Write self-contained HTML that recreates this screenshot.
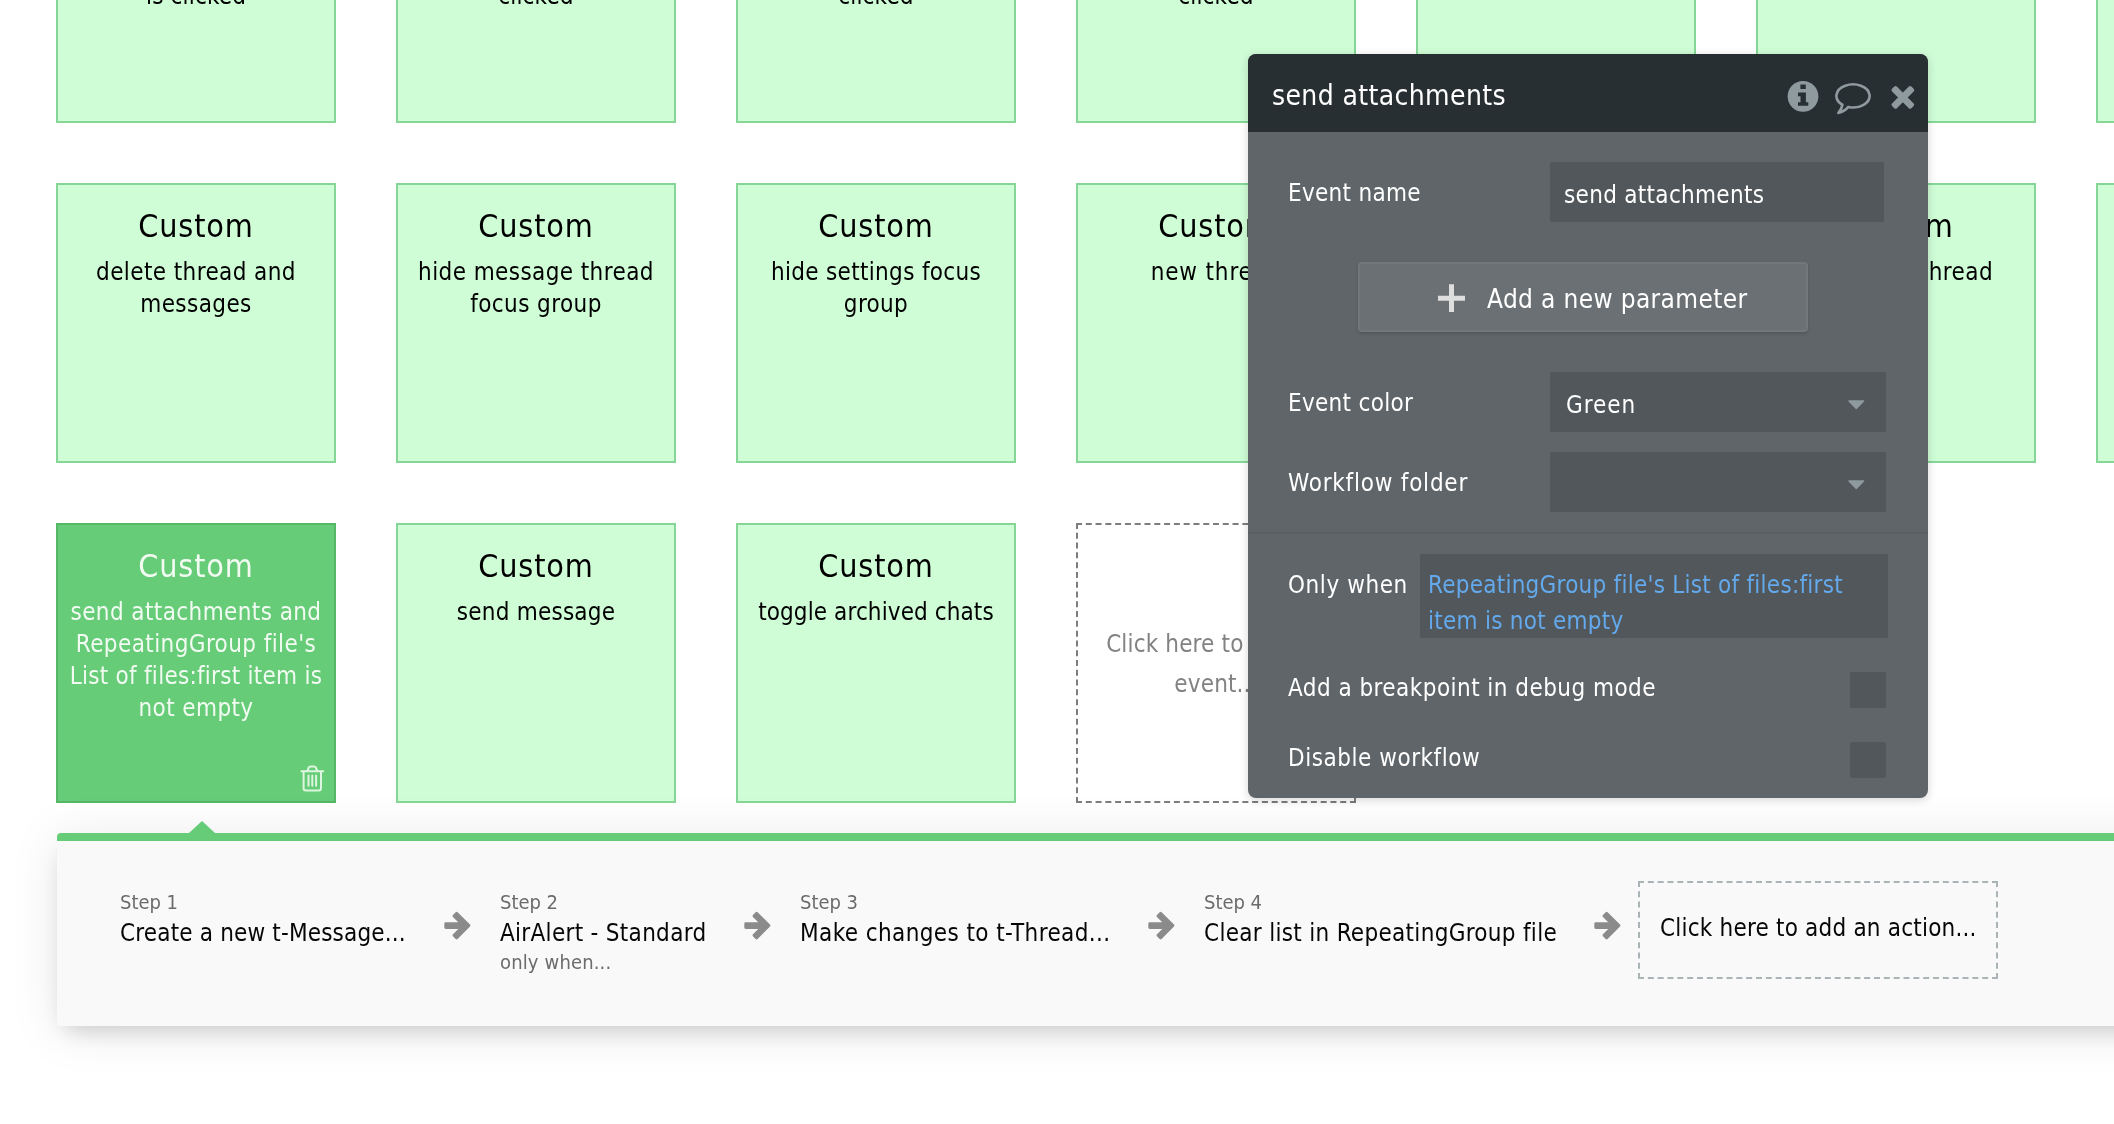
<!DOCTYPE html><html><head><meta charset="utf-8"><title>Workflow editor</title><style>
*{box-sizing:border-box;margin:0;padding:0}
html,body{width:2114px;height:1124px;overflow:hidden;background:#fff}
body{position:relative;font-family:"DejaVu Sans Condensed", "Liberation Sans", sans-serif;color:#000;-webkit-font-smoothing:antialiased}
.ev{position:absolute;width:280px;height:280px;background:#cffdd6;border:2px solid #86d797;text-align:center}
.ev.sel{background:#66cc77;border-color:#56b767;color:#fff}
.ev .t{position:absolute;left:0;right:0;font-size:32px;line-height:40px;white-space:nowrap;letter-spacing:.85px}
.ev .d{position:absolute;left:8px;right:8px;font-size:24px;line-height:32px;letter-spacing:.4px}
.ev.sel .t,.ev.sel .d{color:#f1fbf2}
.ev.new{background:transparent;border:none}
.ev.new .d{color:#828282;line-height:40px}
#app{position:absolute;left:0;top:0;width:2114px;height:1124px;overflow:hidden;will-change:transform}
.abs{position:absolute;white-space:nowrap}
#strip{position:absolute;left:57px;top:833px;width:2200px;height:193px;background:#f9f9f9;border-top:8px solid #66cc77;border-radius:4px;box-shadow:0 5px 50px rgba(0,0,0,.095),0 12px 22px -8px rgba(0,0,0,.17)}
#tri{position:absolute;left:189px;top:821px;width:0;height:0;border-left:13px solid transparent;border-right:13px solid transparent;border-bottom:12px solid #66cc77}
.step{color:#6b6b6b;font-size:20px;line-height:24px;letter-spacing:.25px}
.act{color:#060606;font-size:24px;line-height:32px;letter-spacing:.3px}
#panel{position:absolute;left:1248px;top:54px;width:680px;height:744px;background:#5f6569;border-radius:8px;box-shadow:0 2px 10px rgba(0,0,0,.16);color:#fff;overflow:hidden}
#phead{position:absolute;left:0;top:0;width:680px;height:78px;background:#282f32}
.lbl{font-size:24px;line-height:32px;color:#fff;letter-spacing:.3px}
.inp{position:absolute;background:#51575a;border-radius:2px}
</style></head><body><div id="app">
<div class="ev" style="left:56px;top:-157px">
<div class="d" style="letter-spacing:.15px;top:135.2px">is clicked</div>
</div>
<div class="ev" style="left:396px;top:-157px">
<div class="d" style="letter-spacing:.15px;top:135.2px">clicked</div>
</div>
<div class="ev" style="left:736px;top:-157px">
<div class="d" style="letter-spacing:.15px;top:135.2px">clicked</div>
</div>
<div class="ev" style="left:1076px;top:-157px">
<div class="d" style="letter-spacing:.15px;top:135.2px">clicked</div>
</div>
<div class="ev" style="left:1416px;top:-157px">
</div>
<div class="ev" style="left:1756px;top:-157px">
</div>
<div class="ev" style="left:2096px;top:-157px">
</div>
<div class="ev" style="left:56px;top:183px">
<div class="t" style="top:20.9px">Custom</div>
<div class="d" style="top:71.0px">delete thread and messages</div>
</div>
<div class="ev" style="left:396px;top:183px">
<div class="t" style="top:20.9px">Custom</div>
<div class="d" style="top:71.0px">hide message thread focus group</div>
</div>
<div class="ev" style="left:736px;top:183px">
<div class="t" style="top:20.9px">Custom</div>
<div class="d" style="letter-spacing:.32px;top:71.0px">hide settings focus group</div>
</div>
<div class="ev" style="left:1076px;top:183px">
<div class="t" style="top:20.9px">Custom</div>
<div class="d" style="letter-spacing:.85px;top:71.0px">new thread</div>
</div>
<div class="ev" style="left:1416px;top:183px">
<div class="t" style="top:20.9px">Custom</div>
<div class="d" style="top:71.0px">new message</div>
</div>
<div class="ev" style="left:1756px;top:183px">
<div class="t" style="top:20.9px">Custom</div>
<div class="d" style="left:auto;right:41px;white-space:nowrap;top:71.0px">select new thread</div>
</div>
<div class="ev" style="left:2096px;top:183px">
<div class="t" style="top:20.9px">Custom</div>
<div class="d" style="top:71.0px"></div>
</div>
<div class="ev sel" style="left:56px;top:523px"><div class="t" style="top:20.9px">Custom</div><div class="d" style="top:71.0px">send attachments and<br>RepeatingGroup file's<br><span style="letter-spacing:.26px">List of files:first item is</span><br>not empty</div>
<svg style="position:absolute;left:242px;top:239px" width="25" height="29" viewBox="0 0 25 29"><g fill="none" stroke="#dcf6df" stroke-width="2" stroke-linejoin="round" stroke-linecap="round"><path d="M1.400 7.200H23.200"/><path d="M7.300 7l1.500-3.500q.5-1.100 1.600-1.100h3.800q1.100 0 1.600 1.100l1.500 3.500"/><path d="M3.600 7.600v16.600q0 2.200 2.200 2.200h13q2.200 0 2.200-2.200V7.600"/><path d="M8.500 11.400v10.400M12.300 11.400v10.400M16.100 11.400v10.400"/></g></svg>
</div>
<div class="ev" style="left:396px;top:523px"><div class="t" style="top:20.9px">Custom</div><div class="d" style="top:71.0px;letter-spacing:.22px">send message</div></div>
<div class="ev" style="left:736px;top:523px"><div class="t" style="top:20.9px">Custom</div><div class="d" style="top:71.0px;letter-spacing:.1px">toggle archived chats</div></div>
<div class="ev new" style="left:1076px;top:523px"><svg style="position:absolute;left:0;top:0" width="280" height="280" fill="none" stroke="#7d7d7d" stroke-width="2"><path d="M0 1H280M0 279H280" stroke-dasharray="6 3.786"/><path d="M1 0V280M279 0V280" stroke-dasharray="6 3.786"/></svg>
<div class="d" style="left:20px;right:20px;letter-spacing:.15px;top:100.7px">Click here to add an event...</div></div>
<div id="strip"></div><div id="tri"></div>
<div class="abs step" style="left:120px;letter-spacing:-.05px;top:890.4px">Step 1</div>
<div class="abs act" style="left:120px;letter-spacing:0.17px;top:917.2px">Create a new t-Message...</div>
<svg class="abs" style="left:443.6px;top:911px" width="28" height="30" viewBox="0 0 28 30"><path d="M25.02 14.6L12.62 2.20 9.93 4.89 17.75 12.70H1.70V16.50H17.75L9.93 24.31 12.62 27.00z" fill="#8b8b8b" stroke="#8b8b8b" stroke-width="2.8" stroke-linejoin="round"/></svg>
<div class="abs step" style="left:500px;letter-spacing:-.05px;top:890.4px">Step 2</div>
<div class="abs act" style="left:500px;letter-spacing:0.3px;top:917.2px">AirAlert - Standard</div>
<div class="abs step" style="left:500px;letter-spacing:.15px;top:950.0px">only when...</div>
<svg class="abs" style="left:743.6px;top:911px" width="28" height="30" viewBox="0 0 28 30"><path d="M25.02 14.6L12.62 2.20 9.93 4.89 17.75 12.70H1.70V16.50H17.75L9.93 24.31 12.62 27.00z" fill="#8b8b8b" stroke="#8b8b8b" stroke-width="2.8" stroke-linejoin="round"/></svg>
<div class="abs step" style="left:800px;letter-spacing:-.05px;top:890.4px">Step 3</div>
<div class="abs act" style="left:800px;letter-spacing:0.4px;top:917.2px">Make changes to t-Thread...</div>
<svg class="abs" style="left:1147.6px;top:911px" width="28" height="30" viewBox="0 0 28 30"><path d="M25.02 14.6L12.62 2.20 9.93 4.89 17.75 12.70H1.70V16.50H17.75L9.93 24.31 12.62 27.00z" fill="#8b8b8b" stroke="#8b8b8b" stroke-width="2.8" stroke-linejoin="round"/></svg>
<div class="abs step" style="left:1204px;letter-spacing:-.05px;top:890.4px">Step 4</div>
<div class="abs act" style="left:1204px;letter-spacing:0.3px;top:917.2px">Clear list in RepeatingGroup file</div>
<svg class="abs" style="left:1593.6px;top:911px" width="28" height="30" viewBox="0 0 28 30"><path d="M25.02 14.6L12.62 2.20 9.93 4.89 17.75 12.70H1.70V16.50H17.75L9.93 24.31 12.62 27.00z" fill="#8b8b8b" stroke="#8b8b8b" stroke-width="2.8" stroke-linejoin="round"/></svg>
<svg class="abs" style="left:1638px;top:881px" width="360" height="98" fill="none" stroke="#aab4b7" stroke-width="2"><path d="M0 1H360M0 97H360" stroke-dasharray="6 3.833"/><path d="M1 0V98M359 0V98" stroke-dasharray="6 4.222"/></svg>
<div class="abs act" style="left:1660px;letter-spacing:.2px;top:912.1px">Click here to add an action...</div>
<div id="panel"><div id="phead"></div>
<div class="abs" style="left:24px;top:24.3px;font-size:28px;line-height:36px;letter-spacing:.37px">send attachments</div>
<svg class="abs" style="left:539px;top:26px" width="32" height="32" viewBox="0 0 32 32"><circle cx="16" cy="16.3" r="15.4" fill="#8f9a9e"/><path d="M13.4 4.4h5.4v4.6h-5.4zM11 12.6h7.9v9.6h2.4v3.6H11v-3.6h2.5v-6H11z" fill="#282f32"/></svg>
<svg class="abs" style="left:586px;top:28px" width="38" height="33" viewBox="0 0 38 33"><path d="M14.300 24.930A16.600 11.500 0 1 0 8.400 22.750C8 25.600 6.600 28.400 4.400 30.900 8.900 29.900 12 27.800 14.300 24.930Z" fill="none" stroke="#8f9a9e" stroke-width="2.600" stroke-linejoin="round"/></svg>
<svg class="abs" style="left:640px;top:29px" width="30" height="30" viewBox="0 0 30 30"><g transform="translate(14.850 14.400) rotate(45)" fill="#8f9a9e"><rect x="-13.700" y="-3.400" width="27.400" height="6.800" rx="1.800"/><rect x="-3.400" y="-13.700" width="6.800" height="27.400" rx="1.800"/></g></svg>
<div class="abs lbl" style="left:40px;top:122.7px">Event name</div>
<div class="inp" style="left:302px;top:108px;width:334px;height:60px"></div>
<div class="abs lbl" style="left:316px;top:125.2px">send attachments</div>
<div class="abs" style="left:110px;top:208px;width:450px;height:70px;background:#6a7073;border:2px solid #71787b;border-radius:4px;box-shadow:0 2px 3px rgba(0,0,0,.13)"></div>
<svg class="abs" style="left:190px;top:230px" width="27" height="28" viewBox="0 0 27 28"><path d="M13.500 0.200v27.800M0 14.150h27.200" stroke="#dedede" stroke-width="5" fill="none"/></svg>
<div class="abs" style="left:239px;top:228.0px;font-size:26px;line-height:34px;letter-spacing:.35px">Add a new parameter</div>
<div class="abs lbl" style="left:40px;top:332.7px">Event color</div>
<div class="inp" style="left:302px;top:318px;width:336px;height:60px"></div>
<div class="abs lbl" style="letter-spacing:0.95px;left:318px;top:334.9px">Green</div>
<svg class="abs" style="left:600px;top:345.7px" width="17" height="10" viewBox="0 0 17 10"><path d="M1 1h14.600L8.300 8.600z" fill="#8f9a9e" stroke="#8f9a9e" stroke-width="1.4" stroke-linejoin="round"/></svg>
<div class="abs lbl" style="letter-spacing:0.77px;left:40px;top:412.7px">Workflow folder</div>
<div class="inp" style="left:302px;top:398px;width:336px;height:60px"></div>
<svg class="abs" style="left:600px;top:425.7px" width="17" height="10" viewBox="0 0 17 10"><path d="M1 1h14.600L8.300 8.600z" fill="#8f9a9e" stroke="#8f9a9e" stroke-width="1.4" stroke-linejoin="round"/></svg>
<div class="abs" style="left:0;top:478px;width:680px;height:2px;background:#595f63"></div>
<div class="abs lbl" style="letter-spacing:0.57px;left:40px;top:514.7px">Only when</div>
<div class="inp" style="left:172px;top:500px;width:468px;height:84px"></div>
<div class="abs lbl" style="left:180px;top:512.7px;line-height:36px;letter-spacing:.25px;color:#63a9ec;white-space:normal;width:450px">RepeatingGroup file's List of files:first item is not empty</div>
<div class="abs lbl" style="letter-spacing:0.45px;left:40px;top:618.2px">Add a breakpoint in debug mode</div>
<div class="inp" style="left:602px;top:618px;width:36px;height:36px"></div>
<div class="abs lbl" style="letter-spacing:0.53px;left:40px;top:688.2px">Disable workflow</div>
<div class="inp" style="left:602px;top:688px;width:36px;height:36px"></div>
</div>
</div></body></html>
